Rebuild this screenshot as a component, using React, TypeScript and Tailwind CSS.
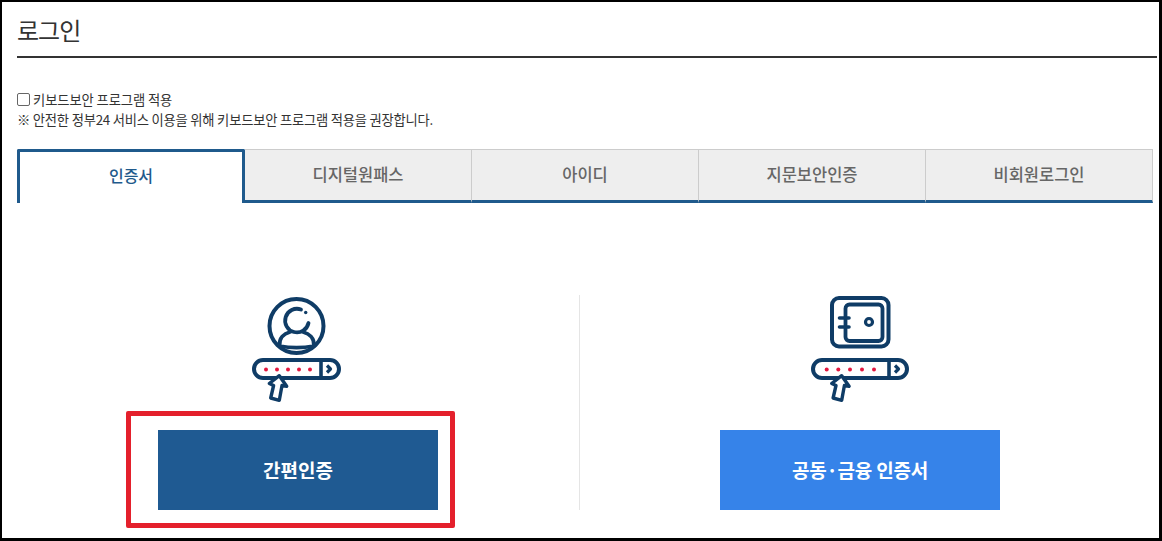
const tabs = ["디지털원패스", "아이디", "지문보안인증", "비회원로그인"];
const navy = "#0f3c66";

function PasswordBar({ x, y, width, dots, tip }: { x: number; y: number; width: number; dots: number[]; tip: number }) {
  const divider = width - 20;
  const ax = tip - 27.3;
  return (
    <g transform={`translate(${x} ${y})`}>
      <rect x="2" y="2" width={width - 4} height="18" rx="9" fill="#fff" stroke={navy} strokeWidth="4" />
      <path d={`M${divider} 2 V20`} stroke={navy} strokeWidth="3.6" />
      <path
        d={`M${divider + 6} 7.5 L${divider + 9.5} 11 L${divider + 6} 14.5`}
        stroke={navy}
        strokeWidth="3.2"
        strokeLinejoin="round"
      />
      {dots.map((cx) => (
        <circle key={cx} cx={cx} cy="11.5" r="2" fill="#e2173f" />
      ))}
      <path
        transform={`translate(${ax} 0)`}
        d="M27.3 17.7 L34.7 28.3 L30 27.5 L27.3 42.3 L18.7 40 L21.6 27.5 L17.3 25.5 Z"
        fill="#fff"
        stroke={navy}
        strokeWidth="3.4"
        strokeLinejoin="round"
      />
    </g>
  );
}

function UserIcon() {
  return (
    <svg width="116" height="110" viewBox="240 295 116 110" fill="none" className="block">
      <g transform="translate(240 290)">
        <circle cx="56.5" cy="36" r="27" stroke={navy} strokeWidth="4" />
        <path d="M61 19.5 A11.8 11.8 0 1 0 68.5 33" stroke={navy} strokeWidth="3.8" strokeLinecap="round" />
        <circle cx="65.7" cy="22.5" r="1.7" fill={navy} />
        <path
          d="M50 42 C44 43.5 39 48 39.5 56 C50 58 63 58 74 56 C74.5 48 69 43.5 63 42"
          stroke={navy}
          strokeWidth="3.8"
          strokeLinecap="round"
          strokeLinejoin="round"
        />
      </g>
      <PasswordBar x={252} y={358} width={89} dots={[14, 25, 36, 47, 58]} tip={27.3} />
    </svg>
  );
}

function SafeIcon() {
  return (
    <svg width="120" height="110" viewBox="800 295 120 110" fill="none" className="block">
      <rect x="832" y="298" width="56.5" height="48.5" rx="7" stroke={navy} strokeWidth="4" />
      <rect x="845.5" y="304.5" width="37" height="36.5" rx="4" stroke={navy} strokeWidth="3.8" />
      <path d="M839.5 318 H849 M839.5 327 H849" stroke={navy} strokeWidth="3.6" strokeLinecap="round" />
      <circle cx="869" cy="322" r="3.5" stroke={navy} strokeWidth="3.2" />
      <PasswordBar x={811} y={358} width={98} dots={[15.7, 27.3, 39, 51, 63]} tip={30.7} />
    </svg>
  );
}

export default function App() {
  return (
    <div
      className="relative h-[541px] w-[1162px] overflow-hidden border-t-2 border-r-[3px] border-b-[3px] border-l-2 border-black bg-white text-[#333]"
      style={{ fontFamily: '"Noto Sans CJK KR", "Liberation Sans", sans-serif' }}
    >
      <div className="pl-[15px]">
        <h1 className="mr-[2px] h-[56px] border-b-2 border-[#333] pt-[10px] text-[24px] leading-[36px] font-normal tracking-[-1px]">
          로그인
        </h1>

        <label className="mt-[33px] flex h-[17px] items-center gap-[3px] text-[13.3px] leading-[17px] tracking-[-0.1px]">
          <span className="h-[13px] w-[13px] rounded-[2px] border border-[#666] bg-white" />
          키보드보안 프로그램 적용
        </label>
        <p className="mt-[3px] text-[13.3px] leading-[17px] tracking-[-0.22px]">
          ※ 안전한 정부24 서비스 이용을 위해 키보드보안 프로그램 적용을 권장합니다.
        </p>

        <div className="mt-[21px] flex h-[54px] w-[1136px]">
          <div className="flex w-[228px] items-center justify-center rounded-t-[2px] border-x-[3px] border-t-[3px] border-[#1f5a8c] bg-white pb-[6px] text-[16px] font-medium text-[#1f5a8c]">
            인증서
          </div>
          {tabs.map((tab) => (
            <div
              key={tab}
              className="flex flex-1 items-center justify-center border-t border-r border-[#ccc] border-b-[3px] border-b-[#1f5a8c] bg-[#eeeeee] pb-[2px] text-[16.5px] font-medium text-[#666]"
            >
              {tab}
            </div>
          ))}
        </div>

        <div className="mt-[92px] grid grid-cols-[563px_560px]">
          <div className="flex h-[215px] flex-col items-center justify-between border-r border-[#e5e5e5]">
            <UserIcon />
            <button className="flex h-[80px] w-[280px] items-center justify-center bg-[#1f5a92] text-[19px] font-bold text-white">
              간편인증
            </button>
          </div>
          <div className="flex h-[215px] flex-col items-center justify-between">
            <SafeIcon />
            <button className="flex h-[80px] w-[280px] items-center justify-center bg-[#3683e9] text-[19px] font-bold tracking-[-0.2px] text-white">
              공동·금융 인증서
            </button>
          </div>
        </div>
      </div>

      {/* annotation box drawn over the button */}
      <div className="absolute top-[409px] left-[124px] h-[117px] w-[329px] rounded-[2px] border-[5px] border-[#e4202c]" />
    </div>
  );
}
